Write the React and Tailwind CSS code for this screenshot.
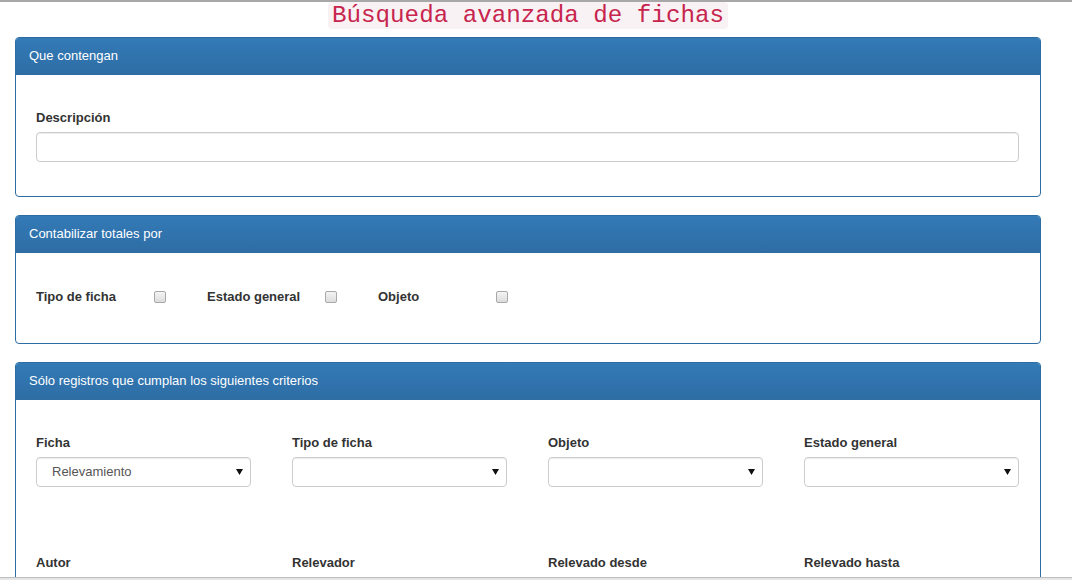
const sans = { fontFamily: '"Liberation Sans", Arial, sans-serif' }

function Panel({ title, children, className = '' }) {
  return (
    <div className={`overflow-hidden rounded-[4px] border border-[#2e6da4] bg-white ${className}`}>
      <div className="h-[37px] bg-gradient-to-b from-[#337ab7] to-[#2e6da4] pl-[13px] text-[13px] leading-[35px] text-white">
        {title}
      </div>
      {children}
    </div>
  )
}

function Checkbox() {
  return (
    <span className="inline-block h-[12px] w-[12px] rounded-[2px] border border-[#a9a9a9] bg-gradient-to-b from-[#f4f4f4] to-[#dcdcdc]" />
  )
}

function SelectBox({ value = '' }) {
  return (
    <div className="flex h-[30px] items-center justify-between rounded-[4px] border border-[#ccc] bg-white pl-[15px] pr-[7px] text-[13px] text-[#555] shadow-[inset_0_1px_1px_rgba(0,0,0,0.075)]">
      <span>{value}</span>
      <svg width="7" height="6" viewBox="0 0 7 6">
        <path d="M0 0 H7 L3.5 6 Z" fill="#111" />
      </svg>
    </div>
  )
}

const filters = [
  { label: 'Ficha', value: 'Relevamiento' },
  { label: 'Tipo de ficha' },
  { label: 'Objeto' },
  { label: 'Estado general' },
]

const secondRow = ['Autor', 'Relevador', 'Relevado desde', 'Relevado hasta']

export default function App() {
  return (
    <div className="relative h-[580px] overflow-hidden border-t-2 border-[#a8a8a8] bg-white text-[#333]" style={sans}>
      <div className="w-[1041px] pl-[15px]">
        <div className="flex justify-center">
          <code
            className="rounded-[4px] bg-[#f9f2f4] px-[4px] text-[24.2px] leading-[27px] text-[#c7254e]"
            style={{ fontFamily: '"Liberation Mono", "Courier New", monospace' }}
          >
            Búsqueda avanzada de fichas
          </code>
        </div>

        <Panel title="Que contengan" className="mt-[8px]">
          <div className="pb-[34px] pl-[20px] pr-[21px] pt-[34px]">
            <label className="mb-[5px] block text-[13px] font-bold leading-[18px]">Descripción</label>
            <div className="h-[30px] rounded-[4px] border border-[#ccc] shadow-[inset_0_1px_1px_rgba(0,0,0,0.075)]" />
          </div>
        </Panel>

        <Panel title="Contabilizar totales por" className="mt-[18px]">
          <div className="flex pb-[37px] pl-[20px] pr-[21px] pt-[35px]">
            {['Tipo de ficha', 'Estado general', 'Objeto'].map((t) => (
              <div key={t} className="flex w-[171px] items-center">
                <span className="w-[118px] text-[13px] font-bold leading-[18px]">{t}</span>
                <Checkbox />
              </div>
            ))}
          </div>
        </Panel>

        <Panel title="Sólo registros que cumplan los siguientes criterios" className="mt-[18px]">
          <div className="pl-[20px] pr-[21px] pt-[34px]">
            <div className="grid grid-cols-4 gap-x-[41px]">
              {filters.map((f) => (
                <div key={f.label}>
                  <label className="mb-[5px] block text-[13px] font-bold leading-[18px]">{f.label}</label>
                  <SelectBox value={f.value} />
                </div>
              ))}
            </div>
            <div className="mt-[67px] grid grid-cols-4 gap-x-[41px]">
              {secondRow.map((t) => (
                <div key={t}>
                  <label className="mb-[5px] block text-[13px] font-bold leading-[18px]">{t}</label>
                  <div className="h-[30px] rounded-[4px] border border-[#ccc]" />
                </div>
              ))}
            </div>
          </div>
        </Panel>
      </div>
      <div className="absolute bottom-0 left-0 h-[3px] w-full border-t border-[#bdbdbd] bg-[#e6e6e6]" />
    </div>
  )
}
